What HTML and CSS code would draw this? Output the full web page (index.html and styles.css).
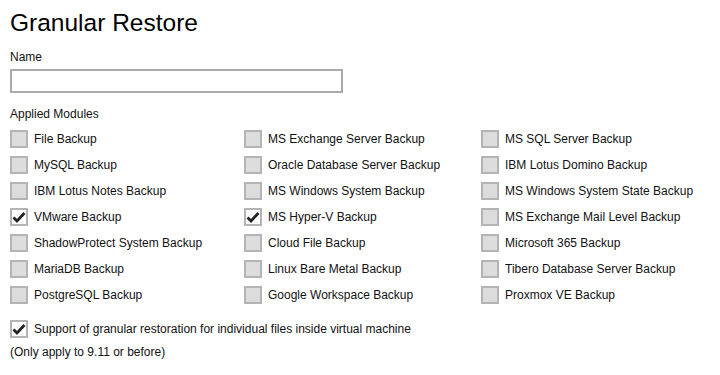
FILE: index.html
```html
<!DOCTYPE html>
<html lang="en">
<head>
    <meta charset="UTF-8">
    <meta name="viewport" content="width=device-width, initial-scale=1.0">
    <title>Granular Restore</title>
    <link rel="stylesheet" href="styles.css">
</head>
<body>
    <div class="page">
        <h1 class="title">Granular Restore</h1>
        <div class="label name-label">Name</div>
        <input class="name-input" type="text">
        <div class="label modules-label">Applied Modules</div>
        <div class="modules">
            <div class="item"><span class="box"></span>File Backup</div>
            <div class="item"><span class="box"></span>MS Exchange Server Backup</div>
            <div class="item"><span class="box"></span>MS SQL Server Backup</div>

            <div class="item"><span class="box"></span>MySQL Backup</div>
            <div class="item"><span class="box"></span>Oracle Database Server Backup</div>
            <div class="item"><span class="box"></span>IBM Lotus Domino Backup</div>

            <div class="item"><span class="box"></span>IBM Lotus Notes Backup</div>
            <div class="item"><span class="box"></span>MS Windows System Backup</div>
            <div class="item"><span class="box"></span>MS Windows System State Backup</div>

            <div class="item"><span class="box checked"><svg viewBox="0 0 18 18"><path d="M3.5 9.5 L7 13 L14.5 5"/></svg></span>VMware Backup</div>
            <div class="item"><span class="box checked"><svg viewBox="0 0 18 18"><path d="M3.5 9.5 L7 13 L14.5 5"/></svg></span>MS Hyper-V Backup</div>
            <div class="item"><span class="box"></span>MS Exchange Mail Level Backup</div>

            <div class="item"><span class="box"></span>ShadowProtect System Backup</div>
            <div class="item"><span class="box"></span>Cloud File Backup</div>
            <div class="item"><span class="box"></span>Microsoft 365 Backup</div>

            <div class="item"><span class="box"></span>MariaDB Backup</div>
            <div class="item"><span class="box"></span>Linux Bare Metal Backup</div>
            <div class="item"><span class="box"></span>Tibero Database Server Backup</div>

            <div class="item"><span class="box"></span>PostgreSQL Backup</div>
            <div class="item"><span class="box"></span>Google Workspace Backup</div>
            <div class="item"><span class="box"></span>Proxmox VE Backup</div>
        </div>
        <div class="item support"><span class="box checked"><svg viewBox="0 0 18 18"><path d="M3.5 9.5 L7 13 L14.5 5"/></svg></span>Support of granular restoration for individual files inside virtual machine</div>
        <div class="label note">(Only apply to 9.11 or before)</div>
    </div>
</body>
</html>
```

FILE: styles.css
```css
body,html{
    margin: 0;
    padding: 0;
    background: #fff;
    font-family: "Liberation Sans", Arial, sans-serif;
    color: #111;
}
.page{
    padding: 8px 10px 0;
}
.title{
    margin: 0;
    font-size: 24.5px;
    font-weight: normal;
    line-height: 30px;
    color: #000;
}
.label{
    font-size: 12px;
    line-height: 16px;
}
.name-label{
    margin-top: 11px;
}
.name-input{
    display: block;
    box-sizing: border-box;
    width: 333px;
    height: 24px;
    margin: 4px 0 0;
    padding: 0 4px;
    border: 2px solid #aaa;
    background: #fff;
    outline: none;
}
.modules-label{
    margin-top: 13px;
}
.modules{
    display: grid;
    grid-template-columns: 234px 237px auto;
    row-gap: 8px;
    margin-top: 8px;
}
.item{
    display: flex;
    align-items: center;
    gap: 6px;
    height: 18px;
    font-size: 12px;
}
.box{
    box-sizing: border-box;
    width: 18px;
    height: 18px;
    flex: none;
    border: 2px solid #b4b4b4;
    background: #dcdcdc;
    position: relative;
}
.box.checked{
    background: #fff;
}
.box svg{
    position: absolute;
    left: -2px;
    top: -2px;
    width: 18px;
    height: 18px;
}
.box svg path{
    fill: none;
    stroke: #222;
    stroke-width: 2.8;
}
.support{
    margin-top: 16px;
}
.note{
    margin-top: 6px;
}
```
